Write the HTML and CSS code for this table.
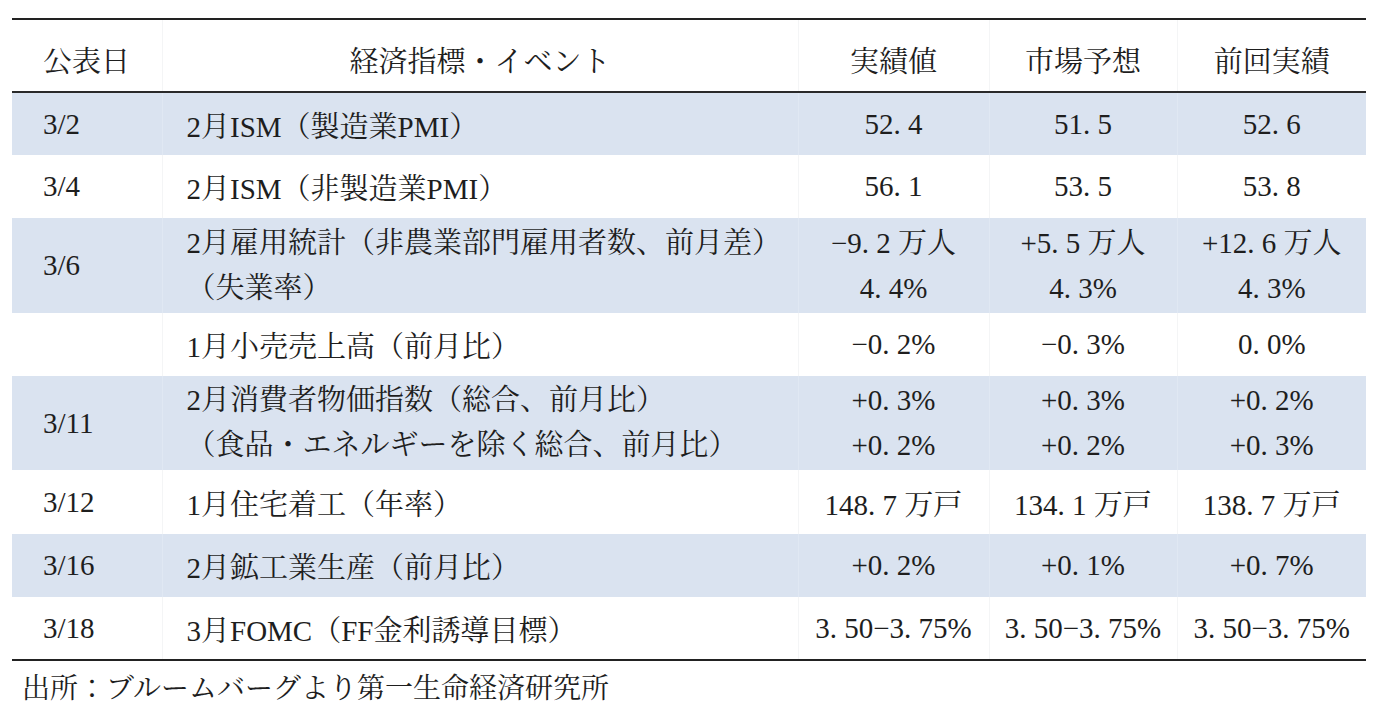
FILE: index.html
```html
<!DOCTYPE html>
<html lang="ja">
<head>
<meta charset="utf-8">
<title>経済指標</title>
<link rel="stylesheet" href="styles.css">
</head>
<body>
<div class="page">
  <table class="econ">
    <colgroup>
      <col class="c-date"><col class="c-event"><col class="c-num"><col class="c-num2"><col class="c-num3">
    </colgroup>
    <thead>
      <tr>
        <th class="date">公表日</th>
        <th class="center">経済指標・イベント</th>
        <th class="center">実績値</th>
        <th class="center">市場予想</th>
        <th class="center">前回実績</th>
      </tr>
    </thead>
    <tbody>
      <tr class="blue h63">
        <td class="date">3/2</td>
        <td class="event">2月ISM（製造業PMI）</td>
        <td class="num">52<span class="dot">.</span>4</td><td class="num">51<span class="dot">.</span>5</td><td class="num">52<span class="dot">.</span>6</td>
      </tr>
      <tr class="white h63">
        <td class="date">3/4</td>
        <td class="event">2月ISM（非製造業PMI）</td>
        <td class="num">56<span class="dot">.</span>1</td><td class="num">53<span class="dot">.</span>5</td><td class="num">53<span class="dot">.</span>8</td>
      </tr>
      <tr class="blue h95">
        <td class="date">3/6</td>
        <td class="event"><div class="ln">2月雇用統計（非農業部門雇用者数、前月差）</div><div class="ln">（失業率）</div></td>
        <td class="num"><div class="ln">−9<span class="dot">.</span>2 万人</div><div class="ln">4<span class="dot">.</span>4%</div></td>
        <td class="num"><div class="ln">+5<span class="dot">.</span>5 万人</div><div class="ln">4<span class="dot">.</span>3%</div></td>
        <td class="num"><div class="ln">+12<span class="dot">.</span>6 万人</div><div class="ln">4<span class="dot">.</span>3%</div></td>
      </tr>
      <tr class="white h63">
        <td class="date"></td>
        <td class="event">1月小売売上高（前月比）</td>
        <td class="num">−0<span class="dot">.</span>2%</td><td class="num">−0<span class="dot">.</span>3%</td><td class="num">0<span class="dot">.</span>0%</td>
      </tr>
      <tr class="blue h94">
        <td class="date">3/11</td>
        <td class="event"><div class="ln">2月消費者物価指数（総合、前月比）</div><div class="ln">（食品・エネルギーを除く総合、前月比）</div></td>
        <td class="num"><div class="ln">+0<span class="dot">.</span>3%</div><div class="ln">+0<span class="dot">.</span>2%</div></td>
        <td class="num"><div class="ln">+0<span class="dot">.</span>3%</div><div class="ln">+0<span class="dot">.</span>2%</div></td>
        <td class="num"><div class="ln">+0<span class="dot">.</span>2%</div><div class="ln">+0<span class="dot">.</span>3%</div></td>
      </tr>
      <tr class="white h64">
        <td class="date">3/12</td>
        <td class="event">1月住宅着工（年率）</td>
        <td class="num">148<span class="dot">.</span>7 万戸</td><td class="num">134<span class="dot">.</span>1 万戸</td><td class="num">138<span class="dot">.</span>7 万戸</td>
      </tr>
      <tr class="blue h63">
        <td class="date">3/16</td>
        <td class="event">2月鉱工業生産（前月比）</td>
        <td class="num">+0<span class="dot">.</span>2%</td><td class="num">+0<span class="dot">.</span>1%</td><td class="num">+0<span class="dot">.</span>7%</td>
      </tr>
      <tr class="white h63 last">
        <td class="date">3/18</td>
        <td class="event">3月FOMC（FF金利誘導目標）</td>
        <td class="num">3<span class="dot">.</span>50−3<span class="dot">.</span>75%</td><td class="num">3<span class="dot">.</span>50−3<span class="dot">.</span>75%</td><td class="num">3<span class="dot">.</span>50−3<span class="dot">.</span>75%</td>
      </tr>
    </tbody>
  </table>
  <p class="source">出所：ブルームバーグより第一生命経済研究所</p>
</div>
</body>
</html>
```

FILE: styles.css
```css
html, body {
  margin: 0;
  padding: 0;
  background: #ffffff;
}

.page {
  padding: 18px 16px 0 12px;
  font-family: "Liberation Serif", "Noto Serif CJK JP", "Noto Sans CJK JP", serif;
  font-size: 29px;
  color: #1e1e1e;
}

.econ {
  width: 1354px;
  border-collapse: collapse;
  table-layout: fixed;
  border-top: 2px solid #222;
  border-bottom: 2px solid #222;
}

.c-date { width: 150px; }
.c-event { width: 636px; }
.c-num { width: 191px; }
.c-num2 { width: 188px; }
.c-num3 { width: 189px; }

.econ th {
  height: 63px;
  font-weight: normal;
  border-bottom: 2px solid #2a2a2a;
  border-left: 1px solid #f4f5f6;
  padding: 8px 0 0 0;
  vertical-align: middle;
}

.econ th:first-child,
.econ td:first-child {
  border-left: none;
}

.econ td {
  padding: 0;
  vertical-align: middle;
  border-left: 1px solid #f4f5f6;
  white-space: nowrap;
}

.econ tr.blue td {
  background: #dae3f0;
  border-left-color: #e0e8f3;
}

.h63 { height: 63px; }
.h64 { height: 64px; }
.h94 { height: 94px; }
.h95 { height: 95px; }

.date {
  text-align: left;
  padding-left: 31px !important;
}

.center { text-align: center; }

.event {
  text-align: left;
  padding-left: 24px !important;
}

.num { text-align: center; }

.dot {
  display: inline-block;
  width: 0.5em;
  text-align: left;
}

.ln {
  line-height: 45px;
}

.source {
  margin: 8px 0 0 10px;
  line-height: 40px;
  font-size: 28px;
}
```
